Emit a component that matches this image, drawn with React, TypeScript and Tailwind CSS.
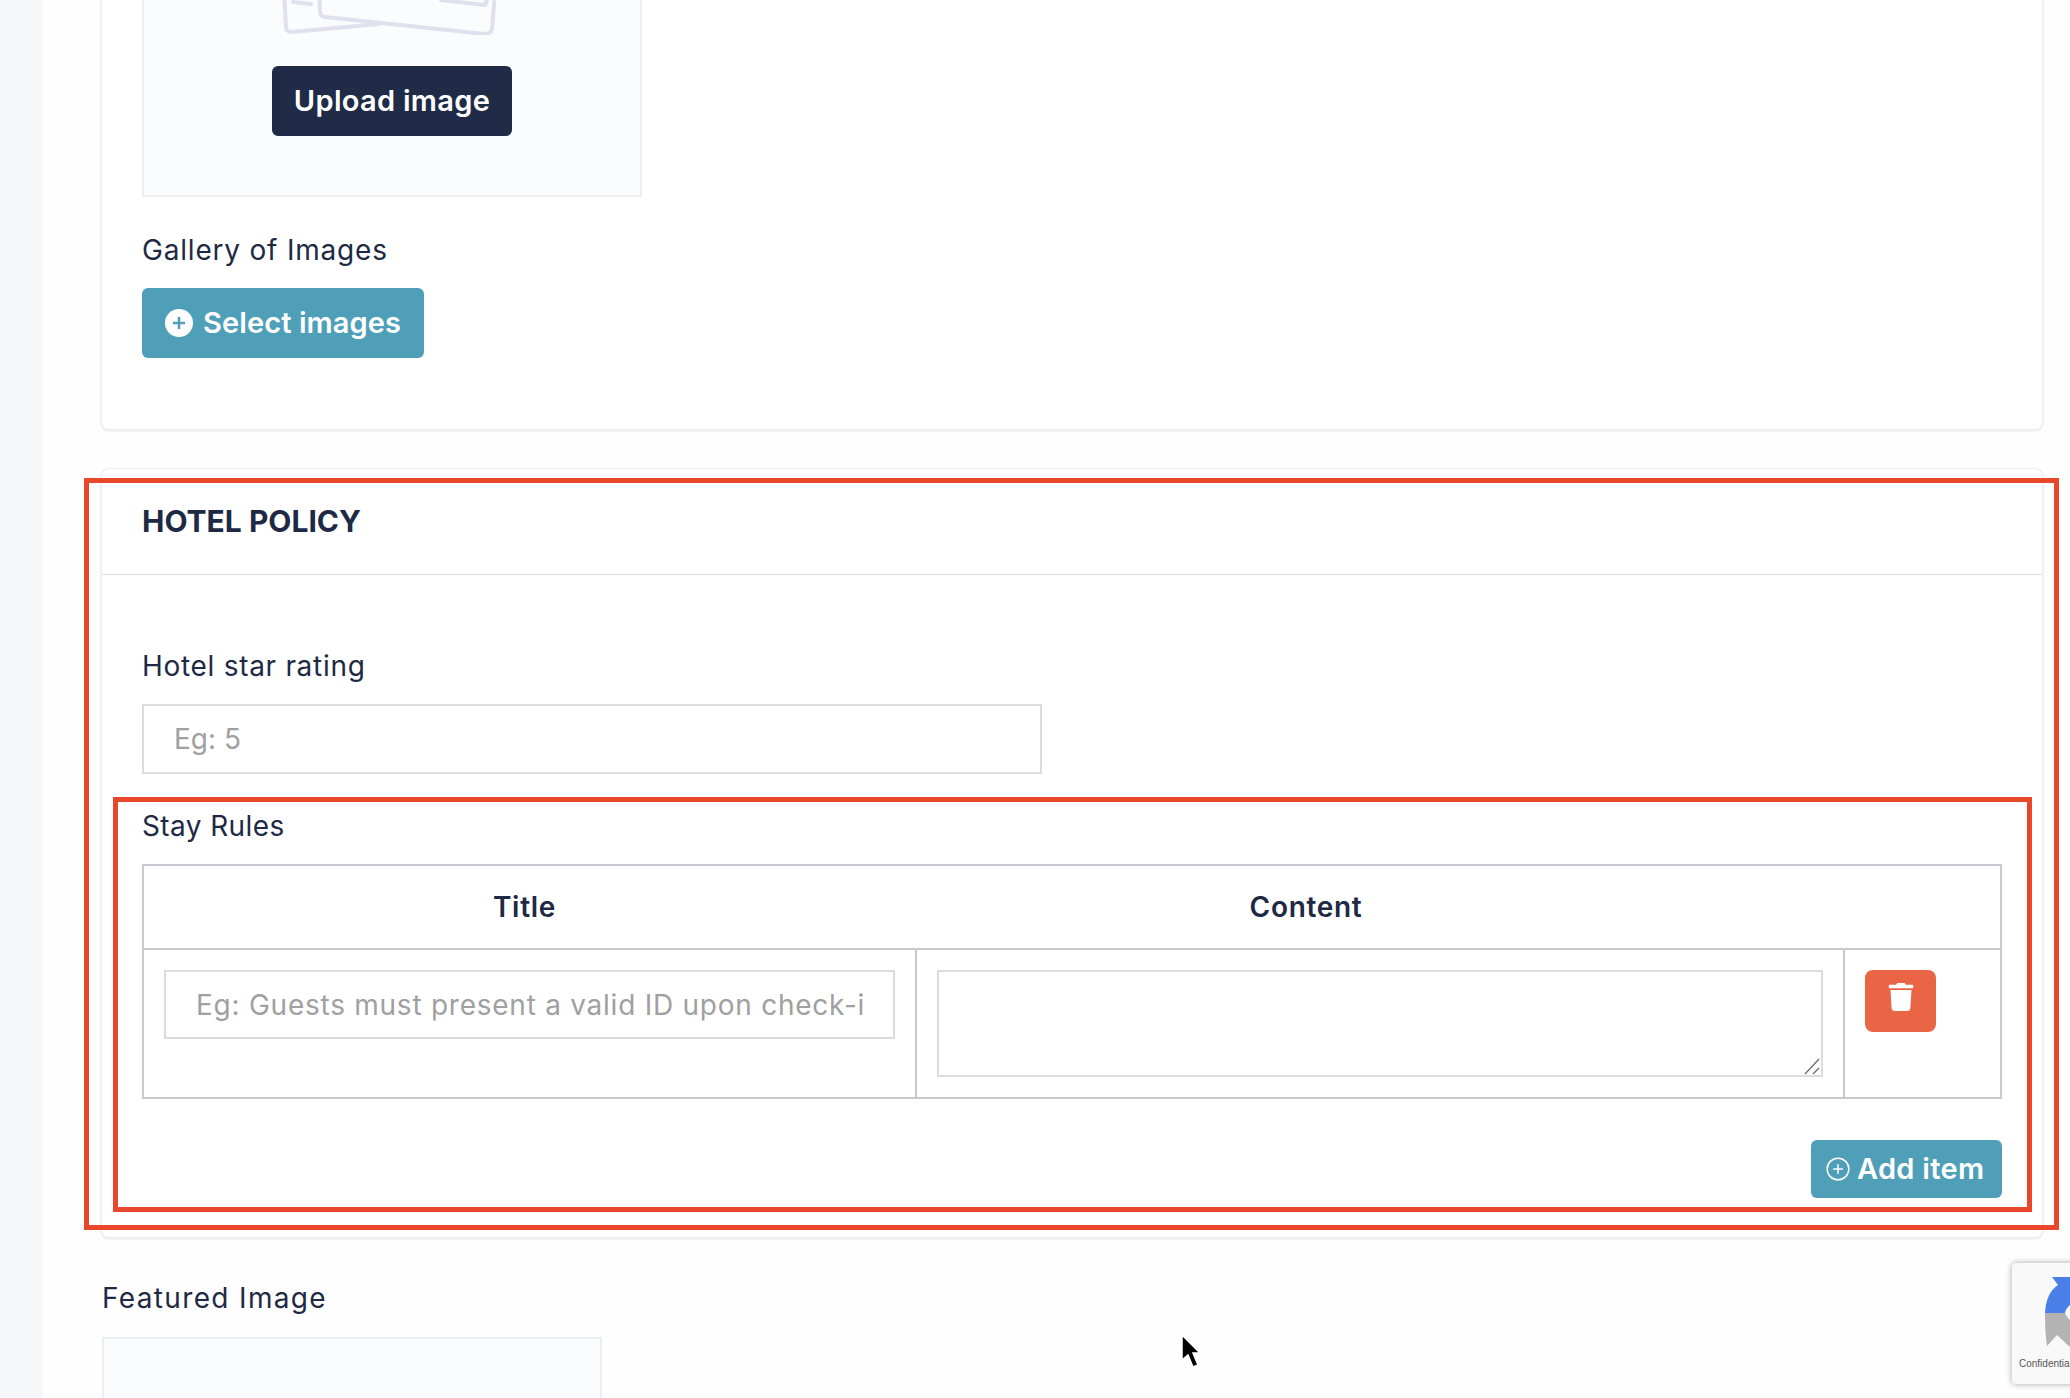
import { CirclePlus } from 'lucide-react'
import { FaTrash } from 'react-icons/fa'

const font = "font-['Inter','Noto_Sans',sans-serif]"

function ImagePlaceholderIcon() {
  return (
    <svg width="215" height="93" viewBox="0 0 215 93" fill="none" stroke="#dfe1ee" strokeWidth="4" strokeLinecap="round" strokeLinejoin="round" className="-ml-[7px]">
      <path d="M3 50 L5 85 Q5 90 11 90 L98 82" />
      <path d="M38 50 L39 70 Q39 74 44 75 L204 92 Q210 92 211 87 L214 50" />
      <path d="M12 60 L30 62" />
      <path d="M160 58 L204 63 L206 58" />
    </svg>
  )
}

function PlusFilled() {
  return (
    <svg width="28" height="28" viewBox="0 0 28 28">
      <circle cx="14" cy="14" r="14" fill="#ffffff" />
      <path d="M14 8v12M8 14h12" stroke="#4f9fb8" strokeWidth="2.5" />
    </svg>
  )
}

function RecaptchaBadge() {
  return (
    <div className="absolute left-[2012px] top-[1263px] w-[80px] h-[121px] bg-[#f9f9f9] rounded-l-[4px] shadow-[0_0_6px_rgba(0,0,0,0.35)] overflow-hidden">
      <svg width="58" height="90" viewBox="0 0 58 90" className="absolute left-0 top-0">
        <path d="M40 14 L58 14 V42 Q54 45 53 50 H33 Q34 30 46 22 Z" fill="#4a7fe8" />
        <path d="M33 50 H53 Q55 55 58 57 V84 L45 72 L35 83 Q33 70 33 50 Z" fill="#b3b3b3" />
      </svg>
      <div className="absolute left-[7px] top-[94px] text-[10px] leading-[13px] whitespace-nowrap text-[#555555] font-['Liberation_Sans',sans-serif]">Confidentia</div>
    </div>
  )
}

function MouseCursor() {
  return (
    <svg width="24" height="38" viewBox="0 0 24 38" className="absolute left-[1179px] top-[1333px]">
      <path d="M3 2 L3 27 L9 22 L14 34 L19 32 L14 20 L21 20 Z" fill="#000000" stroke="#ffffff" strokeWidth="1.5" />
    </svg>
  )
}

export default function App() {
  return (
    <div className={`relative w-[2070px] h-[1398px] overflow-hidden bg-[#fefefe] text-[#1e2a45] ${font}`}>
      <div className="flex h-full">
        <div className="w-[42px] shrink-0 bg-[#f5f7f9]" />
        <main className="flex-1 pl-[59px] pr-[27px]">
          <section className="-mt-[100px] bg-white border border-[#eeeeee] rounded-lg shadow-[0_1px_3px_rgba(0,0,0,0.1)] pl-[40px] pr-[39px] pt-[39px] pb-[71px]">
            <div className="w-[500px] h-[257px] bg-[#fafcfe] border-2 border-[#eceef1] flex flex-col items-center">
              <ImagePlaceholderIcon />
              <button className="mt-[31px] w-[240px] h-[70px] bg-[#1f2b47] text-white text-[29px] font-semibold rounded-md tracking-[0.3px]">Upload image</button>
            </div>
            <div className="mt-[35px] text-[28px] leading-[36px] tracking-[0.8px]">Gallery of Images</div>
            <button className="mt-[20px] w-[282px] h-[70px] bg-[#4f9fb8] text-white text-[29px] font-semibold tracking-[0.1px] rounded-md flex items-center pl-[23px] gap-[10px]">
              <PlusFilled />
              Select images
            </button>
          </section>

          <section className="mt-[38px] bg-white border border-[#eeeeee] rounded-lg shadow-[0_1px_3px_rgba(0,0,0,0.1)]">
            <h2 className="h-[106px] px-[40px] flex items-center text-[30px] font-bold border-b border-[#dddddd]">HOTEL POLICY</h2>
            <div className="pl-[40px] pr-[40px] pt-[73px] pb-[39px]">
              <label className="block text-[28px] leading-[36px] tracking-[0.7px]">Hotel star rating</label>
              <input readOnly placeholder="Eg: 5" className="mt-[20px] block w-[900px] h-[70px] border-2 border-[#dcdcdc] px-[30px] text-[28px] outline-none placeholder:text-[#a0a0a0]" />
              <label className="block mt-[34px] text-[28px] leading-[36px] tracking-[0.4px]">Stay Rules</label>
              <div className="mt-[20px] border-2 border-[#c8c9d0]">
                <div className="h-[84px] flex items-center text-[28px] font-semibold tracking-[0.7px] border-b-2 border-[#c8c9d0]">
                  <div className="w-[761px] text-center">Title</div>
                  <div className="w-[802px] text-center">Content</div>
                </div>
                <div className="flex h-[147px]">
                  <div className="w-[773px] shrink-0 pl-[20px] pr-[20px] pt-[20px] border-r-2 border-[#c8c9d0]">
                    <input readOnly placeholder="Eg: Guests must present a valid ID upon check-in" className="block w-full h-[69px] border-2 border-[#dcdcdc] px-[30px] text-[28px] tracking-[0.75px] outline-none placeholder:text-[#a0a0a0]" />
                  </div>
                  <div className="w-[928px] shrink-0 px-[20px] pt-[20px] border-r-2 border-[#c8c9d0]">
                    <div className="relative h-[107px]">
                      <textarea readOnly className="block w-full h-full resize-none border-2 border-[#dcdcdc] outline-none" />
                      <svg width="16" height="17" viewBox="0 0 16 17" fill="none" stroke="#666666" strokeWidth="1.2" className="absolute right-[3px] bottom-[2px]">
                        <path d="M1 16 L15 1" />
                        <path d="M9 16 L15 10" />
                      </svg>
                    </div>
                  </div>
                  <div className="flex-1 px-[20px] pt-[20px]">
                    <button className="w-[71px] h-[62px] bg-[#e96546] rounded-lg flex items-center justify-center text-white">
                      <FaTrash size={28} className="-mt-[8px]" />
                    </button>
                  </div>
                </div>
              </div>
              <div className="mt-[41px] flex justify-end">
                <button className="w-[191px] h-[58px] bg-[#4f9fb8] text-white text-[29px] font-semibold tracking-[0.3px] rounded-md flex items-center pl-[14px] gap-[6px]">
                  <CirclePlus size={26} strokeWidth={1.4} />
                  Add item
                </button>
              </div>
            </div>
          </section>

          <div className="mt-[42px] ml-[1px] text-[28px] leading-[36px] tracking-[1.35px]">Featured Image</div>
          <div className="mt-[21px] ml-[1px] w-[500px] h-[100px] bg-[#fafcfe] border-2 border-[#eceef1]" />
        </main>
      </div>

      <div className="absolute left-[84px] top-[478px] w-[1975px] h-[752px] border-[5px] border-[#e8472c] pointer-events-none" />
      <div className="absolute left-[113px] top-[797px] w-[1919px] h-[415px] border-[5px] border-[#e8472c] pointer-events-none" />
      <RecaptchaBadge />
      <MouseCursor />
    </div>
  )
}
